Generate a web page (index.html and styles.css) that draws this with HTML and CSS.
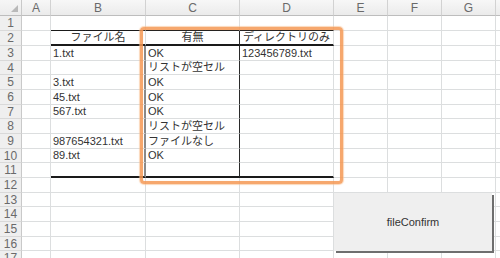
FILE: index.html
```html
<!DOCTYPE html>
<html lang="ja">
<head>
<meta charset="utf-8">
<title>fileConfirm</title>
<link rel="stylesheet" href="styles.css">
</head>
<body>
<div class="wrap">
  <div class="sheet">
    <div class="corner"><span class="tri"></span></div>
    <div class="h">A</div><div class="h">B</div><div class="h">C</div><div class="h">D</div><div class="h">E</div><div class="h">F</div><div class="h">G</div><div class="h"></div>

    <div class="rh">1</div><div class="c"></div><div class="c tb"></div><div class="c tb"></div><div class="c tb"></div><div class="c"></div><div class="c"></div><div class="c"></div><div class="c"></div>

    <div class="rh">2</div><div class="c"></div><div class="c hd ctr">ファイル名</div><div class="c hd ctr vr">有無</div><div class="c hd ctr">ディレクトリのみ</div><div class="c"></div><div class="c"></div><div class="c"></div><div class="c"></div>

    <div class="rh">3</div><div class="c"></div><div class="c lb">1.txt</div><div class="c vr">OK</div><div class="c">123456789.txt</div><div class="c"></div><div class="c"></div><div class="c"></div><div class="c"></div>

    <div class="rh">4</div><div class="c"></div><div class="c lb"></div><div class="c vr">リストが空セル</div><div class="c"></div><div class="c"></div><div class="c"></div><div class="c"></div><div class="c"></div>

    <div class="rh">5</div><div class="c"></div><div class="c lb">3.txt</div><div class="c vr">OK</div><div class="c"></div><div class="c"></div><div class="c"></div><div class="c"></div><div class="c"></div>

    <div class="rh">6</div><div class="c"></div><div class="c lb">45.txt</div><div class="c vr">OK</div><div class="c"></div><div class="c"></div><div class="c"></div><div class="c"></div><div class="c"></div>

    <div class="rh">7</div><div class="c"></div><div class="c lb">567.txt</div><div class="c vr">OK</div><div class="c"></div><div class="c"></div><div class="c"></div><div class="c"></div><div class="c"></div>

    <div class="rh">8</div><div class="c"></div><div class="c lb"></div><div class="c vr">リストが空セル</div><div class="c"></div><div class="c"></div><div class="c"></div><div class="c"></div><div class="c"></div>

    <div class="rh">9</div><div class="c"></div><div class="c lb">987654321.txt</div><div class="c vr">ファイルなし</div><div class="c"></div><div class="c"></div><div class="c"></div><div class="c"></div><div class="c"></div>

    <div class="rh">10</div><div class="c"></div><div class="c lb">89.txt</div><div class="c vr">OK</div><div class="c"></div><div class="c"></div><div class="c"></div><div class="c"></div><div class="c"></div>

    <div class="rh">11</div><div class="c"></div><div class="c lb bt"></div><div class="c vr bt"></div><div class="c bt"></div><div class="c"></div><div class="c"></div><div class="c"></div><div class="c"></div>

    <div class="rh">12</div><div class="c"></div><div class="c"></div><div class="c"></div><div class="c"></div><div class="c"></div><div class="c"></div><div class="c"></div><div class="c"></div>

    <div class="rh">13</div><div class="c"></div><div class="c"></div><div class="c"></div><div class="c"></div><div class="c"></div><div class="c"></div><div class="c"></div><div class="c"></div>

    <div class="rh">14</div><div class="c"></div><div class="c"></div><div class="c"></div><div class="c"></div><div class="c"></div><div class="c"></div><div class="c"></div><div class="c"></div>

    <div class="rh">15</div><div class="c"></div><div class="c"></div><div class="c"></div><div class="c"></div><div class="c"></div><div class="c"></div><div class="c"></div><div class="c"></div>

    <div class="rh">16</div><div class="c"></div><div class="c"></div><div class="c"></div><div class="c"></div><div class="c"></div><div class="c"></div><div class="c"></div><div class="c"></div>

    <div class="rh">17</div><div class="c"></div><div class="c"></div><div class="c"></div><div class="c"></div><div class="c"></div><div class="c"></div><div class="c"></div><div class="c"></div>
  </div>

  <div class="marker"></div>
  <button class="btn" type="button">fileConfirm</button>
</div>
</body>
</html>
```

FILE: styles.css
```css
html, body {
  margin: 0;
  padding: 0;
  background: #ffffff;
  overflow: hidden;
}

.wrap {
  position: relative;
  width: 500px;
  height: 258px;
  overflow: hidden;
}

.sheet {
  display: grid;
  grid-template-columns: 22px 29px 95px 94px 94px 54px 54px 54px 1fr;
  grid-template-rows: 16px 15px 15px 15px 14px 15px 15px 14px 15px 15px 14px 15px 15px 14px 15px 15px 14px 15px;
  width: 520px;
  font-family: "Liberation Sans", "Noto Sans CJK JP", sans-serif;
  font-size: 11px;
  color: #333333;
}

.sheet > div {
  box-sizing: border-box;
  min-width: 0;
  overflow: hidden;
  white-space: nowrap;
}

.corner {
  position: relative;
  background: linear-gradient(#f6f6f6, #ececec);
  border-right: 1px solid #c9c9c9;
  border-bottom: 1px solid #bdbdbd;
}

.tri {
  position: absolute;
  right: 3px;
  bottom: 3px;
  width: 0;
  height: 0;
  border-left: 7px solid transparent;
  border-bottom: 7px solid #b9b9b9;
}

.h {
  display: flex;
  align-items: center;
  justify-content: center;
  background: linear-gradient(#f7f7f7, #ebebeb);
  border-right: 1px solid #d2d2d2;
  border-bottom: 1px solid #bdbdbd;
  color: #6a6a6a;
  font-size: 12px;
}

.rh {
  display: flex;
  align-items: center;
  justify-content: center;
  background: #efefef;
  border-right: 1px solid #c9c9c9;
  border-bottom: 1px solid #d9d9d9;
  color: #6a6a6a;
  font-size: 12px;
}

.c {
  display: flex;
  align-items: flex-end;
  padding: 0 2px 0 2px;
  border-right: 1px solid #dcdedf;
  border-bottom: 1px solid #dcdedf;
  line-height: 13px;
}

.ctr {
  justify-content: center;
}

.tb {
  border-bottom: 1px solid #1a1a1a;
}

.hd {
  border-bottom: 2px solid #1a1a1a;
}

.vr {
  border-right: 1px solid #2a2a2a;
}

.lb {
  border-right: 2px solid #8a8a8a;
}

.bt {
  border-bottom: 2px solid #1a1a1a;
}

.marker {
  position: absolute;
  left: 140px;
  top: 27px;
  width: 197px;
  height: 151px;
  border: 3px solid rgba(244, 152, 84, 0.85);
  border-radius: 4px;
  box-shadow: 0 0 1px 1px rgba(248, 190, 140, 0.6), inset 0 0 1px rgba(248, 190, 140, 0.6);
  pointer-events: none;
}

.btn {
  position: absolute;
  left: 334px;
  top: 193px;
  width: 158px;
  height: 58px;
  margin: 0;
  padding: 0;
  border: none;
  background: #efefef;
  box-shadow: 2px 2px 0 #6e6e6e;
  font-family: "Liberation Sans", "Noto Sans CJK JP", sans-serif;
  font-size: 11px;
  color: #333333;
  cursor: default;
}
```
